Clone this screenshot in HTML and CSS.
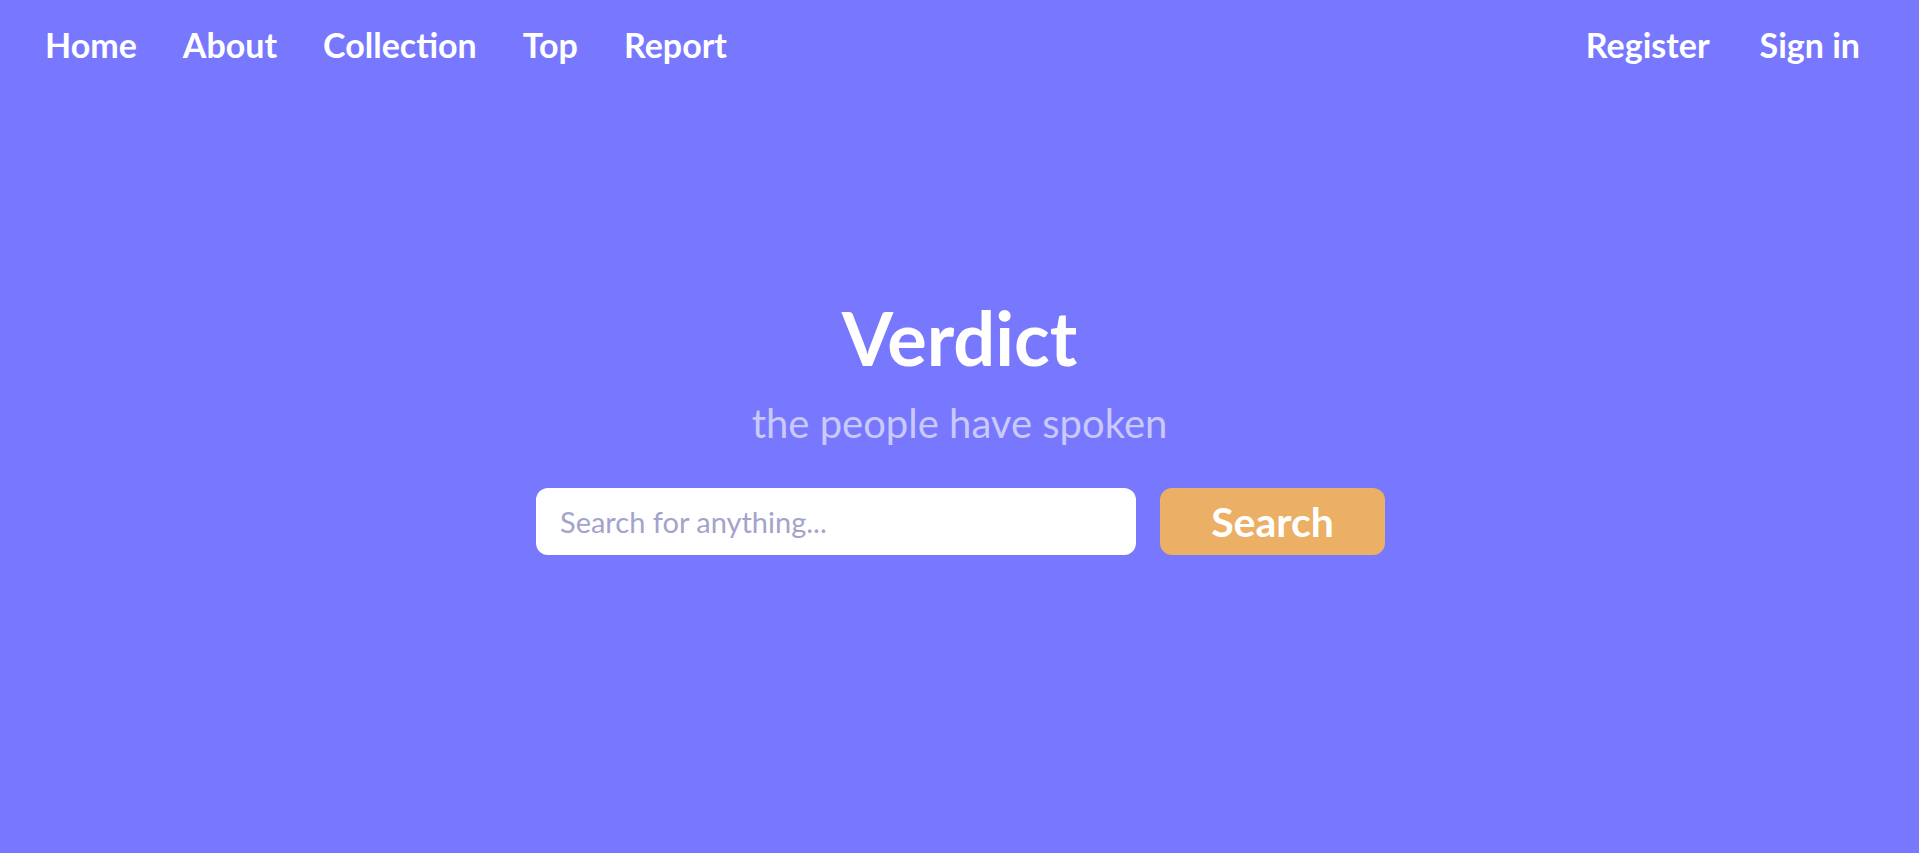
FILE: index.html
```html
<!DOCTYPE html>
<html lang="en">
<head>
<meta charset="utf-8">
<title>Verdict</title>
<link rel="stylesheet" href="styles.css">
</head>
<body>
<nav class="nav">
  <div class="nav-group">
    <a class="nav-link" href="#">Home</a>
    <a class="nav-link" href="#">About</a>
    <a class="nav-link" href="#">Collection</a>
    <a class="nav-link" href="#">Top</a>
    <a class="nav-link" href="#">Report</a>
  </div>
  <div class="nav-group nav-group-right">
    <a class="nav-link" href="#">Register</a>
    <a class="nav-link" href="#">Sign in</a>
  </div>
</nav>
<main class="hero">
  <h1 class="title">Verdict</h1>
  <p class="subtitle">the people have spoken</p>
  <form class="search">
    <input class="search-input" type="text" placeholder="Search for anything...">
    <button class="search-button" type="button">Search</button>
  </form>
</main>
</body>
</html>
```
FILE: styles.css
```css
html, body {
  margin: 0;
  padding: 0;
}
body {
  background: #7878ff;
  font-family: Lato, "Open Sans", "Liberation Sans", sans-serif;
  color: #ffffff;
  min-height: 853px;
}
.nav {
  display: flex;
  justify-content: space-between;
  align-items: center;
  height: 90px;
  padding: 0 59px 0 45px;
}
.nav-group {
  display: flex;
  gap: 46px;
}
.nav-group-right {
  gap: 50px;
}
.nav-link {
  color: #ffffff;
  text-decoration: none;
  font-weight: 700;
  font-size: 34px;
  line-height: 1;
}
.hero {
  display: flex;
  flex-direction: column;
  align-items: center;
  padding-top: 211px;
}
.title {
  margin: 0;
  font-size: 74px;
  line-height: 1;
  font-weight: 700;
}
.subtitle {
  margin: 28px 0 0;
  font-size: 40px;
  line-height: 1;
  font-weight: 400;
  color: #c9c9fb;
}
.search {
  display: flex;
  gap: 24px;
  margin-top: 45px;
  padding-left: 2px;
}
.search-input {
  box-sizing: border-box;
  width: 600px;
  height: 67px;
  border: none;
  border-radius: 12px;
  background: #ffffff;
  padding: 0 24px;
  font-family: inherit;
  font-size: 29px;
  color: #333;
  outline: none;
}
.search-input::placeholder {
  color: #a3a3cc;
}
.search-button {
  width: 225px;
  height: 67px;
  border: none;
  border-radius: 12px;
  background: #ebaf66;
  color: #ffffff;
  font-family: inherit;
  font-weight: 700;
  font-size: 41px;
  padding: 0;
}
```
